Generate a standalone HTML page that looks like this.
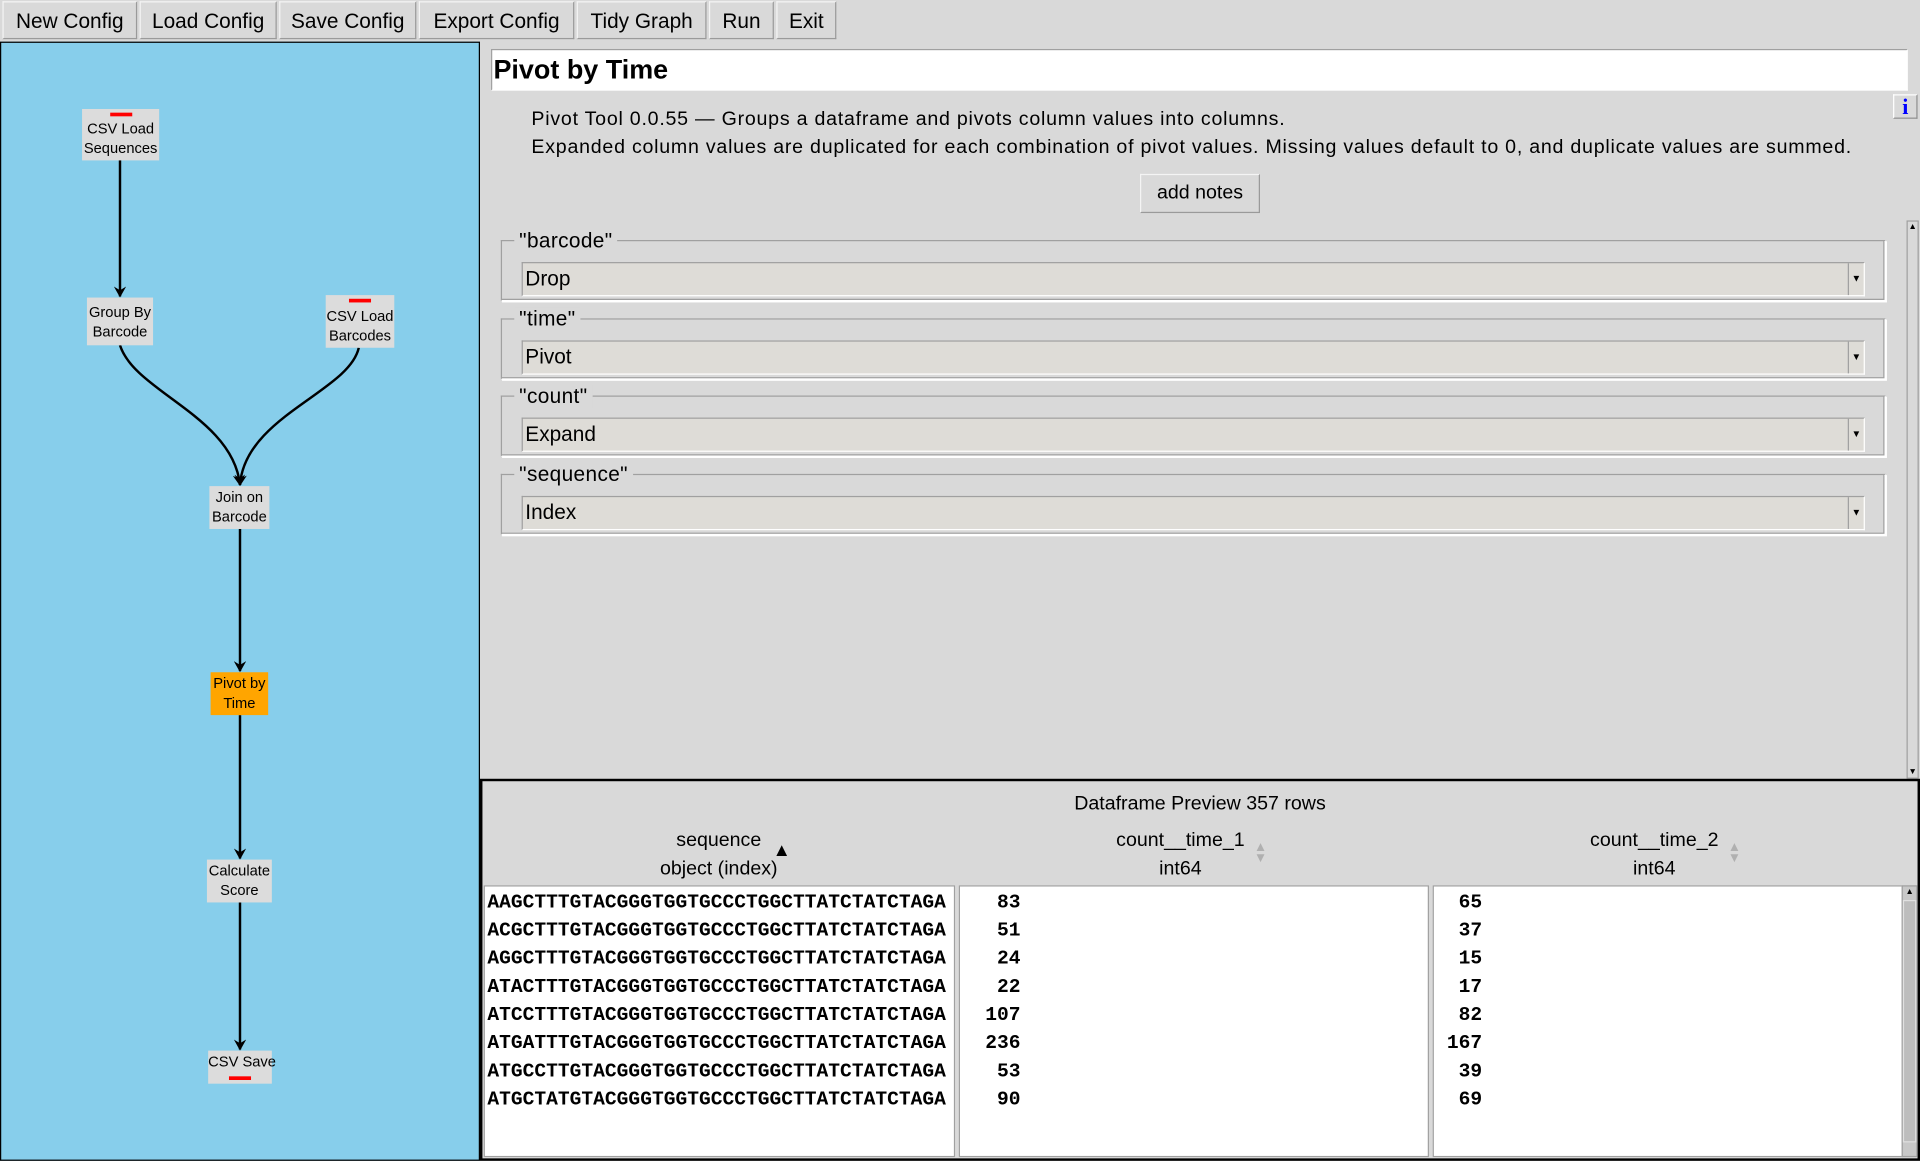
<!DOCTYPE html>
<html><head><meta charset="utf-8">
<style>
html,body{margin:0;padding:0;width:1920px;height:1161px;overflow:hidden;background:#d9d9d9}
#w{position:absolute;left:0;top:0;width:1568px;height:948px;transform:scale(1.22449);transform-origin:0 0;font-family:"Liberation Sans",sans-serif;color:#000;background:#d9d9d9}
.a{position:absolute}
.btn{position:absolute;top:1px;height:31px;background:#d9d9d9;border:1px solid;border-color:#f4f4f4 #9a9a9a #9a9a9a #f4f4f4;font-size:17px;line-height:31px;text-align:center;box-sizing:border-box}
.node{position:absolute;background:#dcdcdc;font-size:12px;line-height:16px;text-align:center;box-sizing:border-box;white-space:nowrap}
.red{position:absolute;height:3px;width:18px;background:#f00;left:50%;margin-left:-9px}
.fs{position:absolute;left:409px;width:1131px;height:50px;border:1px solid #a0a0a0;border-right-color:#fff;border-bottom-color:#fff;box-shadow:inset -1px -1px 0 #a0a0a0,1px 1px 0 #fff;box-sizing:border-box}
.lg{position:absolute;left:10px;top:-10px;background:#d9d9d9;padding:0 4px;font-size:17px;line-height:20px;letter-spacing:0.3px}
.sel{position:absolute;left:16px;top:17px;width:1097px;height:28px;background:#dedcd7;border:1px solid #a0a0a0;border-right-color:#fff;border-bottom-color:#fff;box-sizing:border-box;font-size:17px;line-height:26px;padding-left:2px}
.dd{position:absolute;right:0;top:0;width:12px;height:26px;border-left:1px solid #a0a0a0;font-size:8px;line-height:26px;text-align:center}
.col{position:absolute;top:723px;height:222px;background:#fff;border:1px solid #a0a0a0;box-sizing:border-box;font-family:"Liberation Mono",monospace;font-size:16px;font-weight:bold;line-height:23px;padding-top:2px;white-space:pre}
.hd{position:absolute;font-size:16px;line-height:23px;text-align:center}
.ar{position:absolute;font-size:11px;color:#b0b0b0;line-height:9px}
</style></head><body><div id="w">
<div class="btn" style="left:2px;width:110px">New Config</div>
<div class="btn" style="left:114px;width:112px">Load Config</div>
<div class="btn" style="left:228px;width:112px">Save Config</div>
<div class="btn" style="left:342px;width:127px">Export Config</div>
<div class="btn" style="left:471px;width:106px">Tidy Graph</div>
<div class="btn" style="left:579px;width:53px">Run</div>
<div class="btn" style="left:634px;width:49px">Exit</div>

<div class="a" style="left:0;top:34px;width:392px;height:914px;background:#87ceeb;border:1px solid #000;box-sizing:border-box"></div>
<svg class="a" style="left:0;top:0" width="392" height="948">
<defs><marker id="m" markerWidth="10" markerHeight="10" refX="8" refY="5" orient="auto" markerUnits="userSpaceOnUse"><path d="M0,0 L9,5 L0,10 L3,5 Z" fill="#000"/></marker></defs>
<g stroke="#000" stroke-width="2" fill="none" marker-end="url(#m)">
<path d="M98,130 L98,242"/>
<path d="M98,282 C110,320 190,340 196,396"/>
<path d="M293,284 C285,320 200,340 196,396"/>
<path d="M196,432 L196,548"/>
<path d="M196,584 L196,701"/>
<path d="M196,737 L196,857"/>
</g></svg>
<div class="node" style="left:67px;top:89px;width:63px;height:42px;padding-top:8px">CSV Load<br>Sequences<div class="red" style="top:3px"></div></div>
<div class="node" style="left:71px;top:243px;width:54px;height:39px;padding-top:4px">Group By<br>Barcode</div>
<div class="node" style="left:266px;top:241px;width:56px;height:43px;padding-top:9px">CSV Load<br>Barcodes<div class="red" style="top:3px"></div></div>
<div class="node" style="left:171px;top:397px;width:49px;height:35px;padding-top:1px">Join on<br>Barcode</div>
<div class="node" style="left:172px;top:549px;width:47px;height:35px;padding-top:1px;background:#ffa500">Pivot by<br>Time</div>
<div class="node" style="left:169px;top:702px;width:53px;height:35px;padding-top:1px">Calculate<br>Score</div>
<div class="node" style="left:170px;top:858px;width:52px;height:27px;padding-top:1px">CSV Save<div class="red" style="top:21px"></div></div>

<div class="a" style="left:401px;top:40px;width:1157px;height:34px;background:#fff;border:1px solid #a0a0a0;border-right-color:#fff;border-bottom-color:#fff;box-sizing:border-box;font-size:22px;font-weight:bold;line-height:32px;padding-left:1px">Pivot by Time</div>
<div class="a" style="left:1546px;top:77px;width:20px;height:20px;border:1px solid;border-color:#fff #909090 #909090 #fff;box-sizing:border-box;color:#00f;font-family:'Liberation Serif',serif;font-weight:bold;font-size:18px;line-height:18px;text-align:center">i</div>
<div class="a" style="left:434px;top:86px;font-size:16px;line-height:23px;letter-spacing:0.62px;white-space:nowrap">Pivot Tool 0.0.55 — Groups a dataframe and pivots column values into columns.<br>Expanded column values are duplicated for each combination of pivot values. Missing values default to 0, and duplicate values are summed.</div>
<div class="btn" style="left:931px;top:142px;width:98px;height:32px;font-size:16px;line-height:30px">add notes</div>
<div class="a" style="left:1557px;top:180px;width:10px;height:456px;border:1px solid #a0a0a0;box-sizing:border-box;font-size:7px;text-align:center;line-height:9px">▲</div>
<div class="a" style="left:1557px;top:626px;width:10px;font-size:7px;text-align:center;line-height:9px">▼</div>

<div class="fs" style="top:196px"><div class="lg">"barcode"</div><div class="sel">Drop<div class="dd">▼</div></div></div>
<div class="fs" style="top:260px"><div class="lg">"time"</div><div class="sel">Pivot<div class="dd">▼</div></div></div>
<div class="fs" style="top:323px"><div class="lg">"count"</div><div class="sel">Expand<div class="dd">▼</div></div></div>
<div class="fs" style="top:387px"><div class="lg">"sequence"</div><div class="sel">Index<div class="dd">▼</div></div></div>

<div class="a" style="left:392px;top:636px;width:1176px;height:312px;border:2px solid #000;box-sizing:border-box"></div>
<div class="a" style="left:392px;top:645px;width:1176px;text-align:center;font-size:16px;line-height:23px">Dataframe Preview 357 rows</div>
<div class="hd" style="left:395px;top:675px;width:384px">sequence<br>object (index)</div>
<div class="a" style="left:631px;top:686px;font-size:15px">▲</div>
<div class="hd" style="left:783px;top:675px;width:362px">count__time_1<br>int64</div>
<div class="ar" style="left:1024px;top:688px">▲<br>▼</div>
<div class="hd" style="left:1170px;top:675px;width:362px">count__time_2<br>int64</div>
<div class="ar" style="left:1411px;top:688px">▲<br>▼</div>
<div class="col" style="left:395px;width:385px;padding-left:2px">AAGCTTTGTACGGGTGGTGCCCTGGCTTATCTATCTAGA
ACGCTTTGTACGGGTGGTGCCCTGGCTTATCTATCTAGA
AGGCTTTGTACGGGTGGTGCCCTGGCTTATCTATCTAGA
ATACTTTGTACGGGTGGTGCCCTGGCTTATCTATCTAGA
ATCCTTTGTACGGGTGGTGCCCTGGCTTATCTATCTAGA
ATGATTTGTACGGGTGGTGCCCTGGCTTATCTATCTAGA
ATGCCTTGTACGGGTGGTGCCCTGGCTTATCTATCTAGA
ATGCTATGTACGGGTGGTGCCCTGGCTTATCTATCTAGA</div>
<div class="col" style="left:783px;width:384px;padding-left:11px">  83
  51
  24
  22
 107
 236
  53
  90</div>
<div class="col" style="left:1170px;width:384px;padding-left:1px">  65
  37
  15
  17
  82
 167
  39
  69</div>
<div class="a" style="left:1553px;top:723px;width:13px;height:222px;background:#c8c8c8;border:1px solid #a0a0a0;box-sizing:border-box;font-size:7px;text-align:center;line-height:10px">▲</div>
<div class="a" style="left:1554px;top:735px;width:11px;height:198px;background:#bdbdbd;border:1px solid #e0e0e0;box-sizing:border-box"></div>
</div></body></html>
